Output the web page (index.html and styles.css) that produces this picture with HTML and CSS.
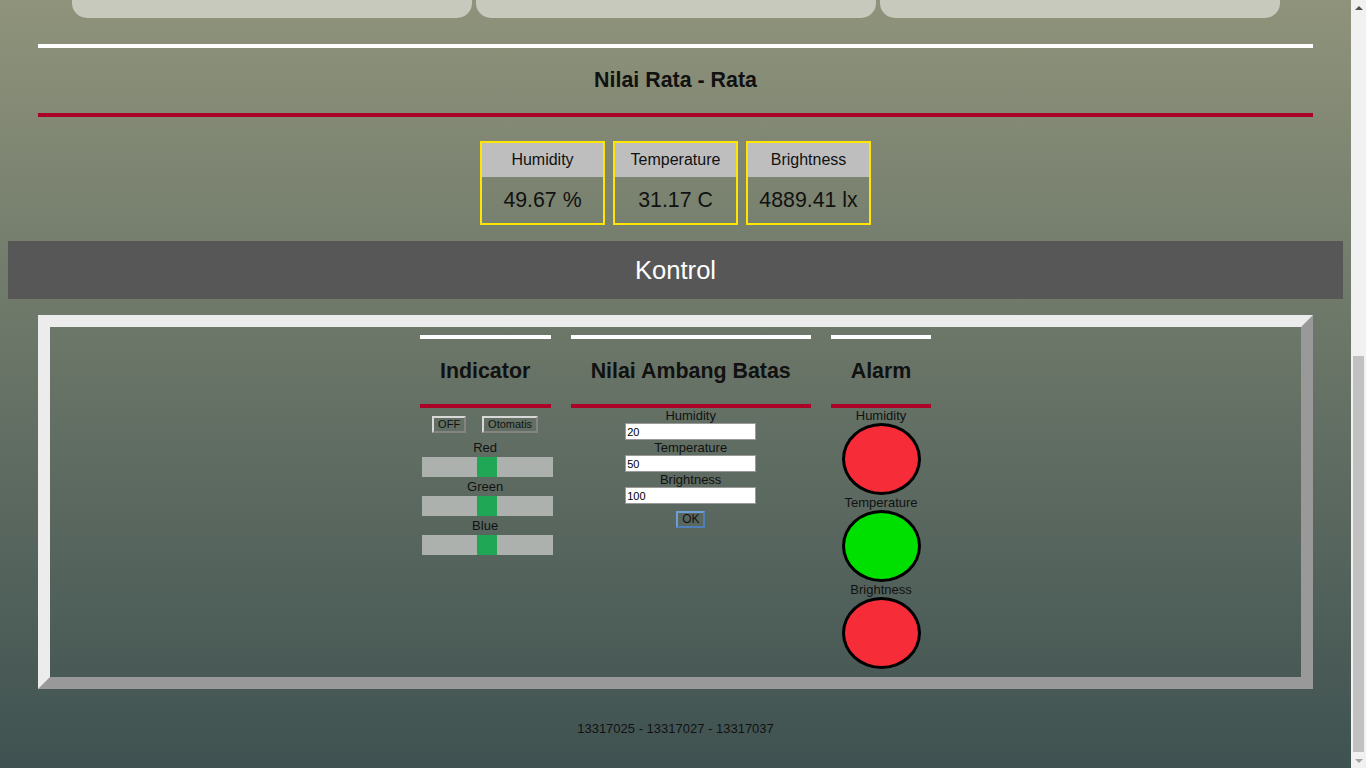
FILE: index.html
```html
<!DOCTYPE html>
<html lang="id">
<head>
<meta charset="utf-8">
<title>Monitoring &amp; Kontrol</title>
<link rel="stylesheet" href="styles.css">
</head>
<body>
  <div class="top-space"></div>
  <div class="cards">
    <div class="card"></div>
    <div class="card"></div>
    <div class="card"></div>
  </div>

  <h2 class="section-title">Nilai Rata - Rata</h2>

  <div class="stats">
    <div class="stat">
      <div class="stat-head">Humidity</div>
      <div class="stat-value">49.67 %</div>
    </div>
    <div class="stat">
      <div class="stat-head">Temperature</div>
      <div class="stat-value">31.17 C</div>
    </div>
    <div class="stat">
      <div class="stat-head">Brightness</div>
      <div class="stat-value">4889.41 lx</div>
    </div>
  </div>

  <div class="bar">Kontrol</div>

  <div class="panel">
    <div class="col">
      <h3 class="col-title">Indicator</h3>
      <div class="btn-row">
        <button class="btn" type="button">OFF</button>
        <button class="btn" type="button">Otomatis</button>
      </div>
      <div class="label">Red</div>
      <input class="slider" type="range" min="0" max="255" value="127">
      <div class="label">Green</div>
      <input class="slider" type="range" min="0" max="255" value="127">
      <div class="label">Blue</div>
      <input class="slider" type="range" min="0" max="255" value="127">
    </div>

    <div class="col">
      <h3 class="col-title">Nilai Ambang Batas</h3>
      <div class="label">Humidity</div>
      <input class="field" type="text" value="20">
      <div class="label">Temperature</div>
      <input class="field" type="text" value="50">
      <div class="label">Brightness</div>
      <input class="field" type="text" value="100">
      <button class="btn btn-ok" type="button">OK</button>
    </div>

    <div class="col">
      <h3 class="col-title">Alarm</h3>
      <div class="label">Humidity</div>
      <div class="lamp lamp-red"></div>
      <div class="label">Temperature</div>
      <div class="lamp lamp-green"></div>
      <div class="label">Brightness</div>
      <div class="lamp lamp-red"></div>
    </div>
  </div>

  <div class="footer">13317025 - 13317027 - 13317037</div>

  <div class="scrollbar" aria-hidden="true">
    <div class="sb-btn"><span class="sb-arrow-up"></span></div>
    <div class="sb-track"><div class="sb-thumb"></div></div>
    <div class="sb-btn"><span class="sb-arrow-down"></span></div>
  </div>

  <script src="script.js"></script>
</body>
</html>
```

FILE: styles.css
```css
html {
  background: linear-gradient(to bottom, #8f937b 0px, #3f5251 768px) fixed;
  background-color: #3f5251;
}

body {
  margin: 8px 23px 8px 8px;
  font-family: "Liberation Sans", Arial, sans-serif;
  color: #111;
}

.top-space {
  height: 74px;
}

.bar {
  background: #575757;
  color: #fff;
  height: 58px;
  line-height: 58px;
  text-align: center;
  font-size: 25.6px;
}

.cards {
  display: flex;
  justify-content: center;
  gap: 4px;
}

.card {
  width: 400px;
  height: 599px;
  background: #c8c9bd;
  border-radius: 15px;
}

.section-title {
  margin: 26px 30px 0;
  border-top: 4px solid #fff;
  border-bottom: 4px solid #ab0028;
  height: 65px;
  line-height: 65px;
  text-align: center;
  font-size: 21.4px;
  font-weight: bold;
}

.stats {
  display: flex;
  justify-content: center;
  gap: 8px;
  margin: 24px 0 16px;
}

.stat {
  width: 121px;
  border: 2px solid #ffe500;
  text-align: center;
}

.stat-head {
  background: #bebebe;
  height: 34px;
  line-height: 34px;
  font-size: 16px;
}

.stat-value {
  height: 46px;
  line-height: 46px;
  font-size: 21.3px;
}

.panel {
  margin: 16px 30px 0;
  border: 12px solid;
  border-color: #ececec #999999 #999999 #ececec;
  display: flex;
  justify-content: center;
  align-items: flex-start;
  gap: 20px;
  padding: 8px 0 8px;
}

.col {
  display: flex;
  flex-direction: column;
  align-items: center;
  text-align: center;
}

.col-title {
  margin: 0;
  padding: 0 20px;
  align-self: stretch;
  border-top: 4px solid #fff;
  border-bottom: 4px solid #ab0028;
  height: 65px;
  line-height: 65px;
  font-size: 21.4px;
  font-weight: bold;
  white-space: nowrap;
}

.label {
  font-size: 13px;
  line-height: 15px;
  height: 15px;
}

.btn-row {
  display: flex;
  gap: 16px;
  padding: 8px 0 7px;
}

.btn {
  font-family: "Liberation Sans", Arial, sans-serif;
  font-size: 11px;
  color: #111;
  background: transparent;
  border: 2px outset #d8d8d8;
  height: 17px;
  padding: 0 4px;
  line-height: 13px;
  margin: 0;
}

.slider {
  -webkit-appearance: none;
  appearance: none;
  align-self: flex-start;
  width: 100%;
  height: 20px;
  margin: 2px 0 2px 2px;
  background: #adb1ad;
  outline: none;
}

.slider::-webkit-slider-thumb {
  -webkit-appearance: none;
  appearance: none;
  width: 20px;
  height: 20px;
  background: #1fa756;
  border: none;
  border-radius: 0;
}

.slider::-moz-range-thumb {
  width: 20px;
  height: 20px;
  background: #1fa756;
  border: none;
  border-radius: 0;
}

.field {
  box-sizing: border-box;
  width: 131px;
  height: 17px;
  margin: 0;
  padding: 0 1px;
  border: 1px solid #999;
  background: #fff;
  font-family: "Liberation Sans", Arial, sans-serif;
  font-size: 11px;
  color: #000;
}

.btn-ok {
  margin-top: 7px;
  border: 2px solid #6d9fd6;
  border-right-color: #4f7fb8;
  border-bottom-color: #4f7fb8;
  font-size: 12px;
  padding: 0 4px;
  width: 29px;
}

.lamp {
  width: 73px;
  height: 66px;
  border: 3px solid #000;
  border-radius: 50%;
}

.lamp-red {
  background: #f62d38;
}

.lamp-green {
  background: #00e000;
}

.footer {
  text-align: center;
  font-size: 13px;
  line-height: 15px;
  padding: 32px 0 24px;
}

/* fake classic scrollbar, overlaid on the right edge of the viewport */
.scrollbar {
  position: fixed;
  top: 0;
  right: 0;
  width: 15px;
  height: 100vh;
  background: #f1f1f1;
  display: flex;
  flex-direction: column;
}

.sb-btn {
  height: 15px;
  flex: none;
  display: flex;
  align-items: center;
  justify-content: center;
}

.sb-arrow-up {
  width: 0;
  height: 0;
  border-left: 4px solid transparent;
  border-right: 4px solid transparent;
  border-bottom: 4px solid #505050;
}

.sb-arrow-down {
  width: 0;
  height: 0;
  border-left: 4px solid transparent;
  border-right: 4px solid transparent;
  border-top: 4px solid #a3a3a3;
}

.sb-track {
  flex: 1;
  display: flex;
  flex-direction: column;
  justify-content: flex-end;
  padding: 0 2px 1px;
}

.sb-thumb {
  height: 396px;
  background: #c1c1c1;
}
```

FILE: script.js
```js
window.scrollTo(0, document.documentElement.scrollHeight);
```
